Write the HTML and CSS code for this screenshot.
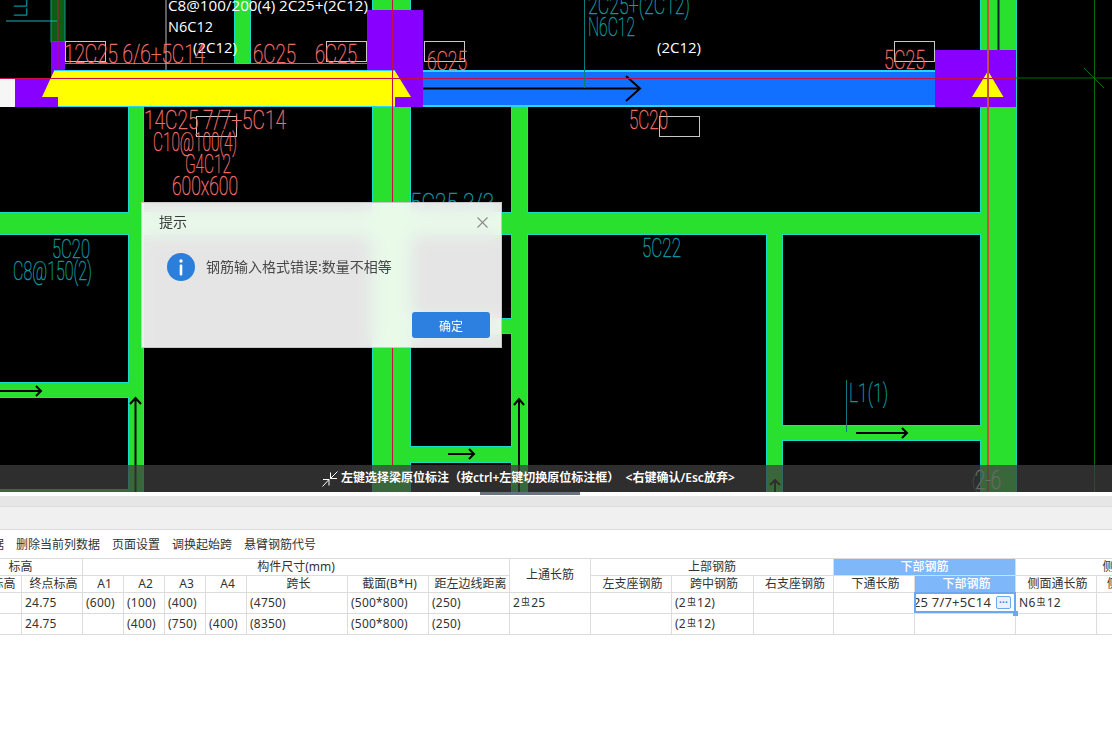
FILE: index.html
```html
<!DOCTYPE html>
<html lang="zh-CN">
<head>
<meta charset="utf-8">
<title>梁原位标注</title>
<link rel="stylesheet" href="styles.css">
</head>
<body>
<div class="app">
  <section class="canvas">
    <svg class="cad" width="1112" height="492" viewBox="0 0 1112 492">
      <defs>
        <g id="beams">
          <rect x="129" y="107" width="14" height="390"/>
          <rect x="373" y="0" width="37" height="497"/>
          <rect x="512" y="107" width="15" height="390"/>
          <rect x="767" y="234" width="15" height="263"/>
          <rect x="981" y="0" width="35" height="497"/>
          <rect x="235" y="0" width="15" height="63"/>
          <rect x="-5" y="213" width="986" height="21"/>
          <rect x="-5" y="383" width="134" height="14"/>
          <rect x="410" y="319" width="102" height="14"/>
          <rect x="410" y="447" width="102" height="15"/>
          <rect x="782" y="426" width="199" height="14"/>
          <rect x="-5" y="490" width="134" height="10"/>
        </g>
      </defs>
      <use href="#beams" class="beam-edge"/>
      <use href="#beams" class="beam-fill"/>

      <path class="hair-teal" d="M65 63.5H235M250 63.5H367"/>
      <path class="hair-grey" d="M166 0V70"/>
      <rect class="col-dark" x="51" y="-2" width="14" height="44"/>
      <path class="hair-teal" d="M6 21H57"/>
      <text class="lbl teal lbl-side" transform="translate(27 17) rotate(-90)" textLength="18" lengthAdjust="spacingAndGlyphs">LL</text>

      <rect class="purple" x="51" y="42" width="14" height="36"/>
      <rect class="purple" x="15" y="78" width="44" height="29"/>
      <rect class="purple" x="367" y="10" width="56" height="97"/>
      <rect class="purple" x="935" y="50" width="81" height="57"/>
      <rect class="white-block" x="0" y="78" width="15" height="29"/>

      <rect class="beam-blue" x="423" y="70" width="512" height="37"/>
      <rect class="edge-cyan" x="423" y="70" width="512" height="2"/>
      <rect class="edge-cyan" x="423" y="105" width="512" height="2"/>
      <rect class="edge-cyan" x="54" y="70" width="341" height="1"/>
      <rect class="edge-cyan" x="58" y="106" width="337" height="1"/>

      <polygon class="yellow" points="54,71 395,71 411,97 395,97 395,106 58,106 58,97 42,97"/>
      <polygon class="yellow" points="988,71 1003.5,97 972,97"/>

      <path class="arrow" d="M423 88.5H640M626 76L640 88.5L626 101"/>
      <path class="arrow" d="M-2 391H41M36 386L41 391L36 396"/>
      <path class="arrow" d="M135.5 492V398M130 404L135.5 398L141 404"/>
      <path class="arrow" d="M519 492V399M514 405L519 399L524 405"/>
      <path class="arrow" d="M448 454H474M469 449L474 454L469 459"/>
      <path class="arrow" d="M856 433H907M902 428L907 433L902 438"/>
      <path class="arrow" d="M775 492V480M770 485L775 480L780 485"/>
      <path class="arrow-thin" d="M998.500 0V50"/>

      <path class="line-red" d="M0 78.500H1016"/>
      <path class="line-red" d="M58 0V70M392.500 0V465"/>
      <path class="line-red-v" d="M988 0V492"/>
      <path class="hair-tealdark" d="M584.500 0V88M846.500 380V432"/>
      <path class="line-dkgreen" d="M1016 78H1112M1094.500 0V492M1084 68L1104 88"/>

      <rect class="box" x="65.500" y="41.500" width="40" height="20"/>
      <rect class="box" x="326.500" y="41.500" width="40" height="20"/>
      <rect class="box" x="424.500" y="41.500" width="40" height="20"/>
      <rect class="box" x="894.500" y="41.500" width="40" height="20"/>
      <rect class="box" x="196.500" y="116.500" width="40" height="20"/>
      <rect class="box" x="659.500" y="116.500" width="40" height="20"/>

      <text class="lbl white small" x="168" y="11" textLength="200" lengthAdjust="spacingAndGlyphs">C8@100/200(4) 2C25+(2C12)</text>
      <text class="lbl white small" x="168" y="32" textLength="45" lengthAdjust="spacingAndGlyphs">N6C12</text>
      <text class="lbl white small" x="193" y="53" textLength="44" lengthAdjust="spacingAndGlyphs">(2C12)</text>
      <text class="lbl white small" x="657" y="53" textLength="44" lengthAdjust="spacingAndGlyphs">(2C12)</text>

      <text class="lbl red" x="64" y="63" textLength="141" lengthAdjust="spacingAndGlyphs">12C25 6/6+5C14</text>
      <text class="lbl red" x="253" y="63" textLength="43" lengthAdjust="spacingAndGlyphs">6C25</text>
      <text class="lbl red" x="315" y="63" textLength="42" lengthAdjust="spacingAndGlyphs">6C25</text>
      <text class="lbl red" x="427" y="70" textLength="40" lengthAdjust="spacingAndGlyphs">6C25</text>
      <text class="lbl red" x="884" y="69" textLength="41" lengthAdjust="spacingAndGlyphs">5C25</text>
      <text class="lbl red" x="144" y="129" textLength="142" lengthAdjust="spacingAndGlyphs">14C25 7/7+5C14</text>
      <text class="lbl red" x="153" y="151" textLength="84" lengthAdjust="spacingAndGlyphs">C10@100(4)</text>
      <text class="lbl red" x="185" y="173" textLength="46" lengthAdjust="spacingAndGlyphs">G4C12</text>
      <text class="lbl red" x="172" y="195" textLength="66" lengthAdjust="spacingAndGlyphs">600x600</text>
      <text class="lbl red" x="629" y="129" textLength="39" lengthAdjust="spacingAndGlyphs">5C20</text>

      <text class="lbl teal" x="588" y="14" textLength="102" lengthAdjust="spacingAndGlyphs">2C25+(2C12)</text>
      <text class="lbl teal" x="588" y="36" textLength="47" lengthAdjust="spacingAndGlyphs">N6C12</text>
      <text class="lbl teal" x="52" y="258" textLength="38" lengthAdjust="spacingAndGlyphs">5C20</text>
      <text class="lbl teal" x="13" y="280" textLength="79" lengthAdjust="spacingAndGlyphs">C8@150(2)</text>
      <text class="lbl teal" x="642" y="257" textLength="39" lengthAdjust="spacingAndGlyphs">5C22</text>
      <text class="lbl teal" x="849" y="402" textLength="39" lengthAdjust="spacingAndGlyphs">L1(1)</text>
      <text class="lbl teal" x="410" y="212" textLength="84" lengthAdjust="spacingAndGlyphs">5C25 3/3</text>

      <path class="axis-ring" d="M392 470L405 477V491H379V477Z"/>
      <circle class="axis-ring" cx="988" cy="482" r="15"/>
      <text class="lbl axis" x="975" y="489" textLength="26" lengthAdjust="spacingAndGlyphs">2-6</text>
    </svg>

    <div class="hint">
      <svg class="hint-icon" width="16" height="16" viewBox="0 0 16 16">
        <path d="M15.500 .5L8.500 7.500M8.500 1.500V7.500H15M.5 15.500L7 8.500M1 8.500H7V14.500"/>
      </svg>
      <span>左键选择梁原位标注（按ctrl+左键切换原位标注框）&nbsp;&nbsp;&lt;右键确认/Esc放弃&gt;</span>
    </div>

    <div class="dialog">
      <header class="dialog-head">
        <span class="dialog-title">提示</span>
        <svg class="dialog-close" width="11" height="11" viewBox="0 0 11 11"><path d="M.5 .5L10.500 10.500M10.500 .5L.5 10.500"/></svg>
      </header>
      <div class="dialog-body">
        <svg class="info" width="28" height="28" viewBox="0 0 28 28">
          <circle class="info-disc" cx="14" cy="14" r="14"/>
          <circle class="info-mark" cx="14" cy="8" r="1.700"/>
          <rect class="info-mark" x="12.700" y="11.500" width="2.600" height="11" rx="1"/>
        </svg>
        <span class="dialog-msg">钢筋输入格式错误:数量不相等</span>
      </div>
      <footer class="dialog-foot"><button class="ok">确定</button></footer>
    </div>
  </section>

  <div class="splitter"><div class="thumb"></div></div>
  <div class="band"></div>
  <div class="tabstrip"></div>

  <nav class="toolbar">
    <span>据</span><span>删除当前列数据</span><span>页面设置</span><span>调换起始跨</span><span>悬臂钢筋代号</span>
  </nav>

  <div class="grid-wrap">
    <table class="grid">
      <colgroup>
        <col class="w63"><col class="w61"><col class="w41"><col class="w41"><col class="w41"><col class="w41">
        <col class="w101"><col class="w81"><col class="w81"><col class="w81"><col class="w81"><col class="w82">
        <col class="w80"><col class="w81"><col class="w101"><col class="w81"><col class="w102"><col class="w39">
      </colgroup>
      <thead>
        <tr class="r1">
          <th colspan="2">标高</th>
          <th colspan="7">构件尺寸(mm)</th>
          <th rowspan="2">上通长筋</th>
          <th colspan="3">上部钢筋</th>
          <th colspan="2" class="sel">下部钢筋</th>
          <th colspan="3">侧面钢筋</th>
        </tr>
        <tr class="r1 sub">
          <th>起点标高</th><th>终点标高</th><th>A1</th><th>A2</th><th>A3</th><th>A4</th><th>跨长</th><th>截面(B*H)</th><th>距左边线距离</th>
          <th>左支座钢筋</th><th>跨中钢筋</th><th>右支座钢筋</th><th>下通长筋</th><th class="sel">下部钢筋</th><th>侧面通长筋</th><th>侧面原位标注筋</th><th>拉筋</th>
        </tr>
      </thead>
      <tbody>
        <tr class="r2">
          <td>24.75</td><td>24.75</td><td>(600)</td><td>(100)</td><td>(400)</td><td></td><td>(4750)</td><td>(500*800)</td><td>(250)</td>
          <td>2<i class="rb">虫</i>25</td><td></td><td>(2<i class="rb">虫</i>12)</td><td></td><td></td>
          <td class="edit">
            <div class="edit-box">
              <span class="edit-text">14C25 7/7+5C14</span>
              <span class="edit-btn">···</span>
            </div>
            <span class="handle"></span>
          </td>
          <td>N6<i class="rb">虫</i>12</td><td></td><td></td>
        </tr>
        <tr class="r2">
          <td>24.75</td><td>24.75</td><td></td><td>(400)</td><td>(750)</td><td>(400)</td><td>(8350)</td><td>(500*800)</td><td>(250)</td>
          <td></td><td></td><td>(2<i class="rb">虫</i>12)</td><td></td><td></td><td></td><td></td><td></td><td></td>
        </tr>
      </tbody>
    </table>
  </div>
</div>
</body>
</html>
```

FILE: styles.css
```css
* { box-sizing: border-box; }
html, body { margin: 0; padding: 0; background: #fff; }
body { overflow: hidden; }
.app {
  width: 1112px; height: 743px; overflow: hidden;
  font: 12px/1.2 "Noto Sans", "Noto Sans CJK SC", sans-serif; color: #333;
  display: flex; flex-direction: column;
}

/* CAD canvas */
.canvas { position: relative; height: 492px; flex: none; background: #000; overflow: hidden; }
.cad { display: block; }
.beam-edge { fill: none; stroke: #18dcc8; stroke-width: 2; }
.beam-fill { fill: #2ae02f; stroke: none; }
.col-dark { fill: #0b5f10; stroke: #129a90; stroke-width: 1; }
.purple { fill: #8800ff; }
.white-block { fill: #f6f6f6; }
.beam-blue { fill: #1170ff; }
.edge-cyan { fill: #27d6ff; }
.yellow { fill: #ffff00; }
.arrow { fill: none; stroke: #000; stroke-width: 2; }
.arrow-thin { fill: none; stroke: #123; stroke-width: 2; }
.line-red { fill: none; stroke: #c4104a; stroke-width: 1; }
.line-red-v { fill: none; stroke: #c8503a; stroke-width: 2; }
.hair-teal { fill: none; stroke: #16b4b0; stroke-width: 1; }
.hair-grey { fill: none; stroke: #bdbdbd; stroke-width: 1; }
.hair-tealdark { fill: none; stroke: #0a7c7c; stroke-width: 1; }
.line-dkgreen { fill: none; stroke: #0b6a0b; stroke-width: 1; }
.box { fill: none; stroke: #c8c8c8; stroke-width: 1; }
.axis-ring { fill: none; stroke: #8a9a8a; stroke-width: 1; opacity: .6; }

.lbl { font-family: "Roboto", "Liberation Sans", sans-serif; font-weight: 100; font-size: 25px; stroke-width: .45; }
.lbl.small { font-size: 14px; font-weight: 400; font-family: "Open Sans", sans-serif; stroke: none; }
.lbl-side { font-size: 19px; }
.red { fill: #ee6e68; stroke: #ee6e68; }
.teal { fill: #0c9aa0; stroke: #0c9aa0; }
.white { fill: #fff; }
.axis { fill: #dfe6df; stroke: #dfe6df; }

/* hint bar over canvas */
.hint {
  position: absolute; left: 0; right: 0; bottom: 0; height: 27px;
  background: rgba(62, 62, 62, .74);
  display: flex; align-items: center; gap: 3px; padding-left: 322px;
  color: #fff; font-weight: 600; font-size: 12px;
}
.hint-icon { fill: none; stroke: #fff; stroke-width: 1; flex: none; }

/* dialog */
.dialog {
  position: absolute; left: 141px; top: 202px; width: 361px; height: 146px;
  border: 1px solid #c8c8c8;
  background: rgba(254, 254, 254, .9);
  -webkit-backdrop-filter: blur(9px);
  backdrop-filter: blur(9px);
  display: flex; flex-direction: column;
}
.dialog-head { height: 39px; display: flex; align-items: center; justify-content: space-between; padding: 0 13px 0 17px; }
.dialog-title { font-size: 14px; color: #3a3a3a; }
.dialog-close { fill: none; stroke: #8a8a8a; stroke-width: 1.100; }
.dialog-body { display: flex; align-items: center; gap: 11px; padding: 11px 0 0 25px; }
.info { flex: none; }
.info-disc { fill: #2b7fdb; }
.info-mark { fill: #fff; }
.dialog-msg { font-size: 14px; color: #484848; }
.dialog-foot { margin-top: auto; display: flex; justify-content: flex-end; padding: 0 11px 9px 0; }
.ok {
  width: 78px; height: 26px; border: 0; border-radius: 3px;
  background: #2d7fe0; color: #fff; font: 12px "Noto Sans CJK SC", sans-serif; padding: 0;
}

/* strips */
.splitter { height: 4px; background: #fff; flex: none; }
.thumb { width: 100px; height: 3px; margin-left: 480px; background: #6a7480; }
.band { height: 11px; background: #e6e6e6; border-bottom: 1px solid #dcdcdc; flex: none; }
.tabstrip { height: 23px; background: #f0f0f0; border-bottom: 1px solid #dcdcdc; flex: none; }
.toolbar {
  height: 28px; flex: none; display: flex; align-items: center; gap: 12px;
  margin-left: -8px; white-space: nowrap; padding-top: 2px;
}

/* table */
.grid-wrap { flex: none; overflow: hidden; border-top: 0; }
.grid {
  table-layout: fixed; border-collapse: collapse; margin-left: -42px; width: 1279px;
  font-size: 12px; color: #333;
}
.w63 { width: 63px; } .w61 { width: 61px; } .w41 { width: 41px; }
.w101 { width: 101px; } .w81 { width: 81px; } .w82 { width: 82px; }
.w80 { width: 80px; } .w102 { width: 102px; } .w39 { width: 39px; }
.grid th, .grid td { border: 1px solid #dcdcdc; padding: 0; overflow: hidden; white-space: nowrap; }
.grid th { font-weight: 400; text-align: center; }
.grid .sub th { padding-left: 3px; }
.grid td { padding-left: 3px; letter-spacing: .2px; }
.r1 { height: 17px; }
.r2 { height: 21px; }
.grid th.sel { background: #7fb8fa; color: #fff; font-weight: 500; }
.rb { font-style: normal; font-size: 9px; position: relative; top: -2px; margin: 0 1px; font-family: "Noto Sans CJK SC", sans-serif; }

.grid td.edit { padding: 0; position: relative; overflow: visible; }
.edit-box {
  height: 21px; margin: -1px 0 0 -1px; width: 102px;
  border: 2px solid #6aa9f0; background: #fff;
  display: flex; align-items: center; gap: 5px; padding: 0 3px 0 0;
}
.edit-text { flex: 1; min-width: 0; overflow: hidden; white-space: nowrap; display: flex; justify-content: flex-end; font-size: 13px; }
.edit-btn {
  flex: none; width: 15px; height: 13px; border: 1px solid #6aa9f0; border-radius: 2px;
  background: #e8f1fd; color: #3b83df; font-weight: 700; font-size: 10px; line-height: 10px; text-align: center;
}
.handle { position: absolute; right: -3px; bottom: -3px; width: 5px; height: 5px; background: #6aa9f0; }
```
